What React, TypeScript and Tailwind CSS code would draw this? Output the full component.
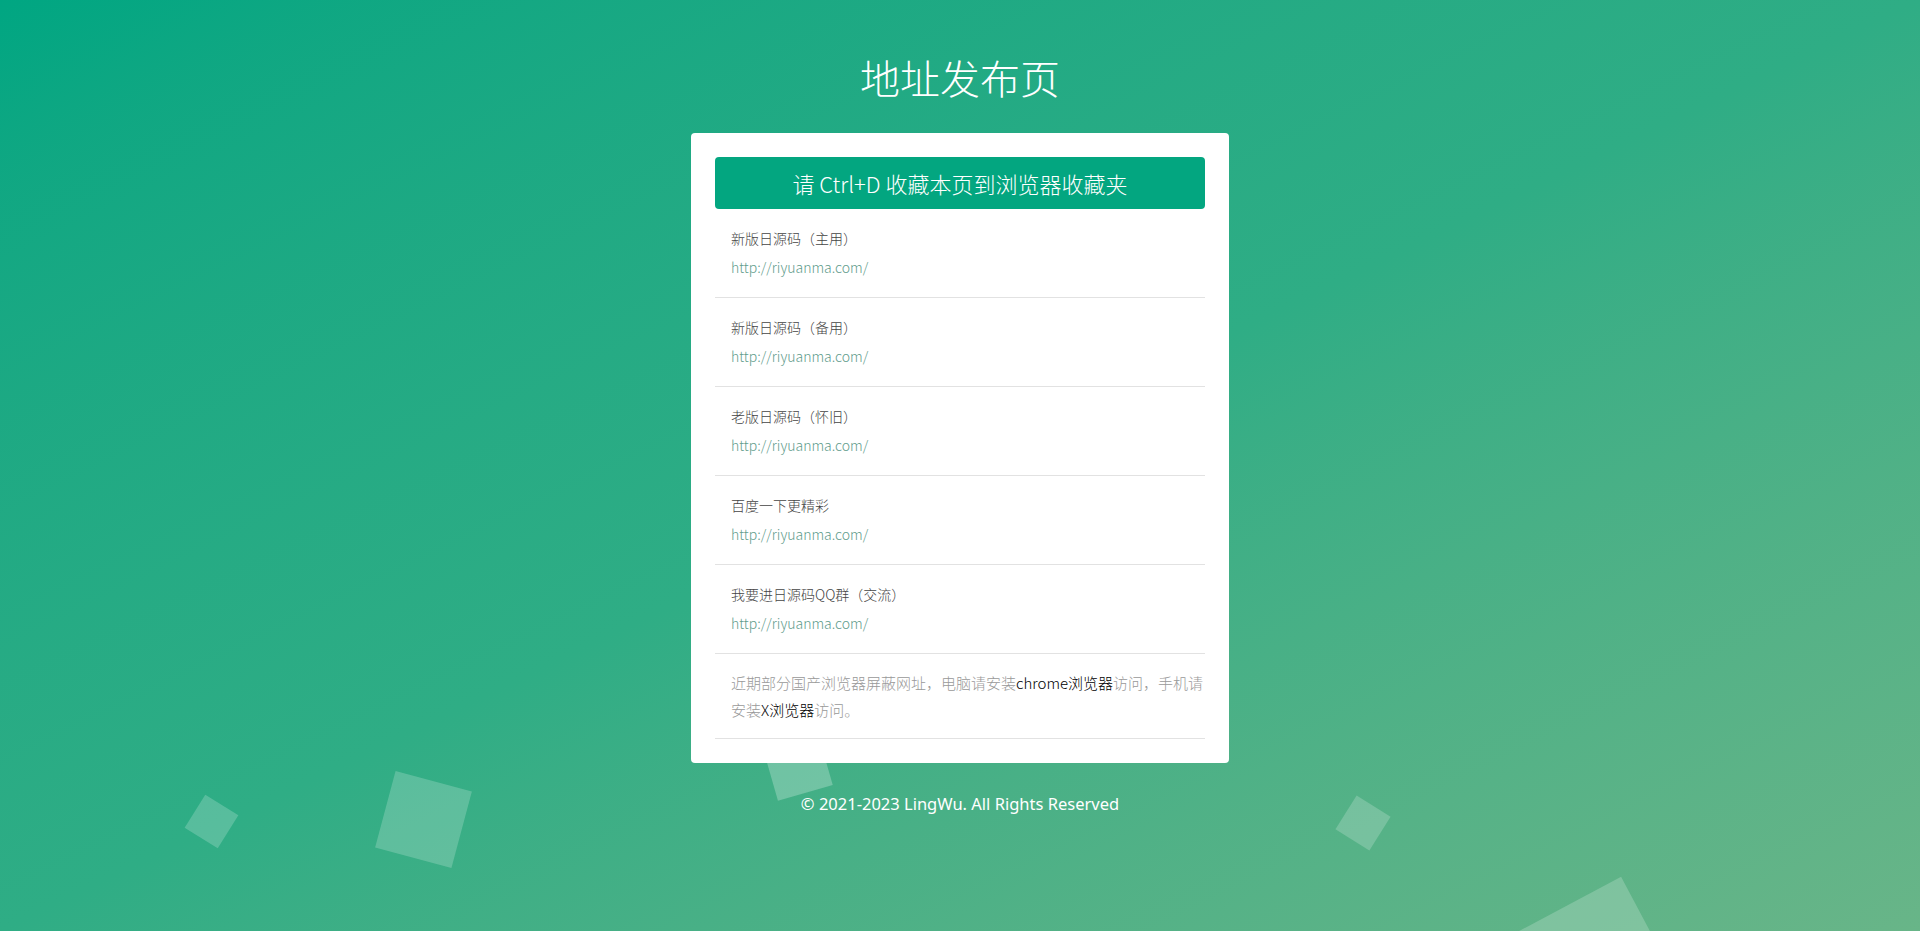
const links = [
  { name: '新版日源码（主用）', url: 'http://riyuanma.com/' },
  { name: '新版日源码（备用）', url: 'http://riyuanma.com/' },
  { name: '老版日源码（怀旧）', url: 'http://riyuanma.com/' },
  { name: '百度一下更精彩', url: 'http://riyuanma.com/' },
  { name: '我要进日源码QQ群（交流）', url: 'http://riyuanma.com/' },
]

const lightFont = { fontFamily: '"Noto Sans CJK SC Light", "Noto Sans CJK SC", "Noto Sans", sans-serif' }

function Squares() {
  // decorative floating squares on the background
  return (
    <>
      <div className="absolute left-[192px] top-[802px] w-[39px] h-[39px] rotate-[32deg] bg-white/20" />
      <div className="absolute left-[384px] top-[780px] w-[79px] h-[79px] rotate-[15deg] bg-white/20" />
      <div className="absolute left-[769px] top-[737px] w-[57px] h-[57px] -rotate-[16deg] bg-white/25" />
      <div className="absolute left-[1343px] top-[803px] w-[40px] h-[40px] rotate-[32deg] bg-white/20" />
      <div className="absolute left-[1508px] top-[905px] w-[160px] h-[160px] rotate-[62deg] bg-white/20" />
    </>
  )
}

export default function App() {
  return (
    <div
      className="relative h-screen w-full overflow-hidden bg-linear-to-br from-[#00a682] via-[#2fad85] to-[#68b588]"
      style={{ fontFamily: '"Noto Sans CJK SC", "Noto Sans", sans-serif' }}
    >
      <Squares />
      <div className="relative flex flex-col items-center pt-[55px]">
        <h1 className="h-[44px] text-[40px] leading-[44px] font-light text-white" style={lightFont}>
          地址发布页
        </h1>

        <div className="mt-[34px] w-[538px] rounded-[4px] bg-white p-[24px]">
          <div
            className="flex h-[52px] items-center justify-center rounded-[4px] bg-[#03a680] text-[22px] font-light text-white"
            style={lightFont}
          >
            请 Ctrl+D 收藏本页到浏览器收藏夹
          </div>

          {links.map((item, i) => (
            <a
              key={i}
              href="#"
              className="block border-b border-[#e2e2e2] px-[16px] py-[15px] text-[14px] leading-[29px]"
              style={lightFont}
            >
              <div className="text-[#444]">{item.name}</div>
              <div className="font-light text-[#5f9c8c]">{item.url}</div>
            </a>
          ))}

          <div
            className="border-b border-[#e2e2e2] py-[15px] pl-[16px] text-[15px] leading-[27px] font-light text-[#999]"
            style={lightFont}
          >
            近期部分国产浏览器屏蔽网址，电脑请安装<span className="text-black">chrome浏览器</span>访问，手机请安装<span className="text-black">X浏览器</span>访问。
          </div>
        </div>

        <p
          className="mt-[29px] text-[16.5px] leading-[24px] text-white"
          style={{ fontFamily: '"Noto Sans", "Noto Sans CJK SC", sans-serif' }}
        >
          © 2021-2023 LingWu. All Rights Reserved
        </p>
      </div>
    </div>
  )
}
